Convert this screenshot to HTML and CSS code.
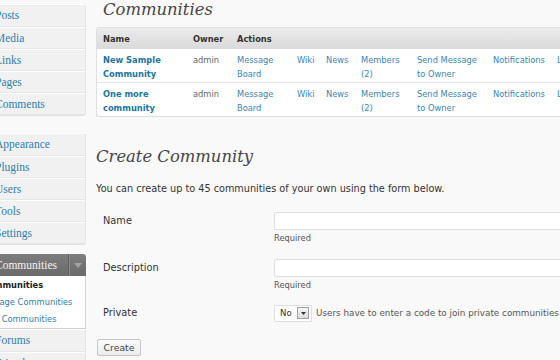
FILE: index.html
```html
<!DOCTYPE html>
<html>
<head>
<meta charset="utf-8">
<link rel="stylesheet" href="styles.css">
</head>
<body>
<div class="page">
  <nav class="sidebar">
    <ul class="menu-group">
      <li>Posts</li>
      <li>Media</li>
      <li>Links</li>
      <li>Pages</li>
      <li>Comments</li>
    </ul>
    <ul class="menu-group second">
      <li>Appearance</li>
      <li>Plugins</li>
      <li>Users</li>
      <li>Tools</li>
      <li>Settings</li>
    </ul>
    <div class="menu-open">
      <div class="menu-head">
        <span class="menu-head-label">Communities</span>
        <span class="menu-toggle"><svg width="8" height="5" viewBox="0 0 8 5"><path d="M0 0h8L4 5z" fill="#a4a4a4"/></svg></span>
      </div>
      <ul class="submenu">
        <li class="current">Communities</li>
        <li>Manage Communities</li>
        <li>Find Communities</li>
      </ul>
    </div>
    <ul class="menu-group third">
      <li>Forums</li>
      <li>Friends</li>
    </ul>
  </nav>

  <main class="content">
    <section class="list-wrap">
      <h2 class="title list-title">Communities</h2>
      <table class="widefat">
        <colgroup>
          <col class="c-name"><col class="c-owner"><col class="c-board"><col class="c-wiki"><col class="c-news"><col class="c-members"><col class="c-send"><col class="c-notif"><col class="c-leave">
        </colgroup>
        <thead>
          <tr><th>Name</th><th>Owner</th><th colspan="7">Actions</th></tr>
        </thead>
        <tbody>
          <tr>
            <td><a class="name">New Sample<br>Community</a></td>
            <td class="owner">admin</td>
            <td><a>Message<br>Board</a></td>
            <td><a>Wiki</a></td>
            <td><a>News</a></td>
            <td><a>Members<br>(2)</a></td>
            <td><a>Send Message<br>to Owner</a></td>
            <td><a>Notifications</a></td>
            <td><a>Leave</a></td>
          </tr>
          <tr>
            <td><a class="name">One more<br>community</a></td>
            <td class="owner">admin</td>
            <td><a>Message<br>Board</a></td>
            <td><a>Wiki</a></td>
            <td><a>News</a></td>
            <td><a>Members<br>(2)</a></td>
            <td><a>Send Message<br>to Owner</a></td>
            <td><a>Notifications</a></td>
            <td><a>Leave</a></td>
          </tr>
        </tbody>
      </table>
    </section>

    <section class="create-wrap">
      <h2 class="title create-title">Create Community</h2>
      <p class="intro">You can create up to 45 communities of your own using the form below.</p>
      <div class="form-grid">
        <div class="label">Name</div>
        <div class="field"><input class="text-input" type="text"><span class="hint">Required</span></div>
        <div class="label">Description</div>
        <div class="field"><input class="text-input" type="text"><span class="hint">Required</span></div>
        <div class="label private-label">Private</div>
        <div class="field inline">
          <span class="select"><span class="select-value">No</span><span class="select-btn"><svg width="5" height="3" viewBox="0 0 5 3"><path d="M0 0h5L2.5 3z" fill="#333"/></svg></span></span>
          <span class="desc">Users have to enter a code to join private communities</span>
        </div>
      </div>
      <button class="button">Create</button>
    </section>
  </main>
</div>
</body>
</html>
```

FILE: styles.css
```css
html, body {
  margin: 0;
  padding: 0;
  overflow: hidden;
  background: #f9f9f9;
}
body {
  width: 560px;
  height: 360px;
  font-family: "DejaVu Sans", Verdana, sans-serif;
  font-size: 8.3px;
  color: #333;
}
ul { list-style: none; margin: 0; padding: 0; }

.page {
  display: flex;
  align-items: flex-start;
}

/* sidebar */
.sidebar {
  flex: 0 0 100px;
  width: 100px;
  margin-left: -14px;
  margin-top: 4px;
}
.menu-group {
  background: #f1f1f1;
  border-right: 1px solid #e3e3e3;
  border-bottom: 1px solid #e0e0e0;
  border-radius: 0 3px 3px 0;
}
.menu-group li {
  height: 21px;
  line-height: 21px;
  padding-left: 9px;
  border-top: 1px solid #fff;
  box-shadow: inset 0 -1px 0 #e6e6e6;
  font-family: "Liberation Serif", "Times New Roman", serif;
  font-size: 11.5px;
  color: #2e7fab;
}
.menu-group li:first-child { height: 22px; line-height: 21px; }
.menu-group.second { margin-top: 17px; }
.menu-open { margin-top: 9px; }
.menu-head {
  display: flex;
  height: 22px;
  background: linear-gradient(#7d7d7d, #6a6a6a);
  border-radius: 0 3px 0 0;
  color: #f4f4f4;
  font-family: "Liberation Serif", "Times New Roman", serif;
  font-size: 11.5px;
  line-height: 22px;
}
.menu-head-label { flex: 1; padding-left: 9px; }
.menu-toggle {
  width: 17px;
  display: flex;
  align-items: center;
  justify-content: center;
  border-left: 1px solid #5f5f5f;
  box-shadow: inset 1px 0 0 #8a8a8a;
}
.submenu {
  background: #fff;
  border-right: 1px solid #d6d6d6;
  border-bottom: 1px solid #cfcfcf;
  padding: 1px 0 0;
}
.submenu li {
  height: 17px;
  line-height: 17px;
  padding-left: 1px;
  text-indent: -5px;
  color: #2e7fab;
  white-space: nowrap;
  overflow: hidden;
}
.submenu li.current {
  color: #222;
  font-weight: bold;
}
.menu-group.third { margin-top: 0; border-bottom: 0; }

/* content */
.content {
  flex: 0 0 auto;
  margin-left: 10px;
  width: 600px;
}
.title {
  margin: 0;
  font-family: "DejaVu Serif", Georgia, serif;
  font-style: italic;
  font-weight: normal;
  color: #464646;
  font-size: 16.4px;
  line-height: 24px;
}
.list-title {
  margin-top: -2px;
  padding-left: 7px;
  height: 29px;
}
.widefat {
  border-collapse: separate;
  border-spacing: 0;
  table-layout: fixed;
  width: 515px;
  border: 1px solid #dfdfdf;
  border-right: 0;
  background: #fff;
  border-radius: 3px 0 0 3px;
}
.c-name { width: 90px; }
.c-owner { width: 44px; }
.c-board { width: 60px; }
.c-wiki { width: 29px; }
.c-news { width: 35px; }
.c-members { width: 56px; }
.c-send { width: 76px; }
.c-notif { width: 64px; }
.c-leave { width: 60px; }
.widefat th {
  text-align: left;
  font-weight: bold;
  color: #333;
  height: 21px;
  padding: 0 6px;
  background: linear-gradient(#ebebeb, #dadada);
  white-space: nowrap;
}
.widefat td {
  vertical-align: top;
  padding: 3px 6px 1px;
  line-height: 14px;
  border-top: 1px solid #fff;
  border-bottom: 1px solid #e6e6e6;
  white-space: nowrap;
}
.widefat tbody tr:last-child td { border-bottom: 0; }
.widefat a { color: #3a86b0; }
.widefat a.name { color: #21759b; font-weight: bold; }
.widefat td.owner { color: #666; }

.create-wrap { padding-top: 28px; }
.create-title { height: 24px; }
.intro {
  margin: 13px 0 0;
  line-height: 14px;
  font-size: 9.7px;
  color: #333;
}
.form-grid {
  display: grid;
  grid-template-columns: 178px 1fr;
  row-gap: 15px;
  margin-top: 16px;
}
.label {
  padding-left: 7px;
  line-height: 18px;
  font-size: 9.8px;
  color: #333;
}
.private-label, .field.inline { margin-top: -2px; }
.field {
  display: flex;
  flex-direction: column;
  gap: 2px;
}
.text-input {
  box-sizing: border-box;
  width: 320px;
  height: 18px;
  margin: 0;
  border: 1px solid #dfdfdf;
  border-radius: 2px;
  background: #fff;
}
.hint {
  line-height: 12px;
  color: #555;
}
.field.inline {
  flex-direction: row;
  align-items: center;
  gap: 4px;
}
.select {
  box-sizing: border-box;
  display: inline-flex;
  align-items: center;
  justify-content: space-between;
  width: 38px;
  height: 17px;
  border: 1px solid #dfdfdf;
  background: #fff;
  padding: 0 2px 0 5px;
}
.select-value { color: #333; font-size: 8.6px; }
.select-btn {
  box-sizing: border-box;
  width: 12px;
  height: 12px;
  border: 1px solid #a0a0a0;
  background: linear-gradient(#f6f6f6, #dcdcdc);
  display: flex;
  align-items: center;
  justify-content: center;
}
.desc { color: #555; white-space: nowrap; font-size: 8.8px; }
.button {
  display: block;
  margin: 17px 0 0 1px;
  box-sizing: border-box;
  width: 44px;
  height: 17px;
  padding: 0;
  font-family: "DejaVu Sans", Verdana, sans-serif;
  font-size: 9.3px;
  color: #464646;
  background: linear-gradient(#fbfbfb, #ececec);
  border: 1px solid #c6c6c6;
  border-radius: 2px;
}
```
